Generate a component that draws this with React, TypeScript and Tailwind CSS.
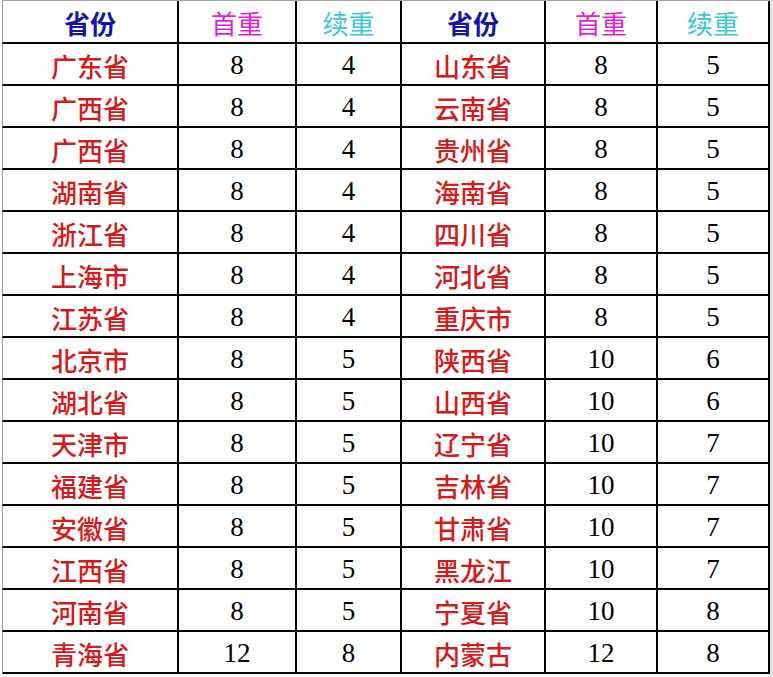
import React from "react";

const rows: [string, string, string, string, string, string][] = [
  ["广东省", "8", "4", "山东省", "8", "5"],
  ["广西省", "8", "4", "云南省", "8", "5"],
  ["广西省", "8", "4", "贵州省", "8", "5"],
  ["湖南省", "8", "4", "海南省", "8", "5"],
  ["浙江省", "8", "4", "四川省", "8", "5"],
  ["上海市", "8", "4", "河北省", "8", "5"],
  ["江苏省", "8", "4", "重庆市", "8", "5"],
  ["北京市", "8", "5", "陕西省", "10", "6"],
  ["湖北省", "8", "5", "山西省", "10", "6"],
  ["天津市", "8", "5", "辽宁省", "10", "7"],
  ["福建省", "8", "5", "吉林省", "10", "7"],
  ["安徽省", "8", "5", "甘肃省", "10", "7"],
  ["江西省", "8", "5", "黑龙江", "10", "7"],
  ["河南省", "8", "5", "宁夏省", "10", "8"],
  ["青海省", "12", "8", "内蒙古", "12", "8"],
];

const cjk = "font-['Noto_Sans_CJK_SC',sans-serif]";
const serif = "font-['Liberation_Serif','Times_New_Roman',serif]";

function Cell({ children, className }: { children: React.ReactNode; className: string }) {
  return (
    <div className={`flex items-center justify-center border-b-2 border-r-2 border-black pt-[3px] ${className}`}>
      {children}
    </div>
  );
}

export default function App() {
  const header = [
    { t: "省份", c: "text-[#1414a8] font-bold" },
    { t: "首重", c: "text-[#e01ed8]" },
    { t: "续重", c: "text-[#3cc6d6]" },
  ];
  return (
    <div className="w-[773px] h-[677px] bg-white overflow-hidden relative">
      <div className="flex h-full">
        <div className="w-[2px] shrink-0 bg-white" />
        <div className="flex flex-col">
          <div className="grid grid-cols-[177px_118px_105px_144px_112px_112px] grid-rows-[43px] border-t border-[#a8a8a0]">
            {[...header, ...header].map((h, i) => (
              <Cell
                key={i}
                className={`${cjk} text-[26px] leading-none ${h.c} ${i === 0 ? "border-l border-l-[#9c9c8c]" : ""}`}
              >
                {h.t}
              </Cell>
            ))}
          </div>
          <div className="grid grid-cols-[177px_118px_105px_144px_112px_112px] auto-rows-[42px]">
            {rows.map((r, ri) =>
              r.map((v, ci) => {
                const isName = ci === 0 || ci === 3;
                return (
                  <Cell
                    key={`${ri}-${ci}`}
                    className={`${isName ? `${cjk} text-[#d41a1a] font-medium text-[26px]` : `${serif} text-black text-[27px]`} leading-none ${ci === 0 ? "border-l border-l-[#9c9c8c]" : ""}`}
                  >
                    {v}
                  </Cell>
                );
              })
            )}
          </div>
        </div>
        <div className="flex-1 bg-[#e4e4e4]" />
      </div>
    </div>
  );
}
